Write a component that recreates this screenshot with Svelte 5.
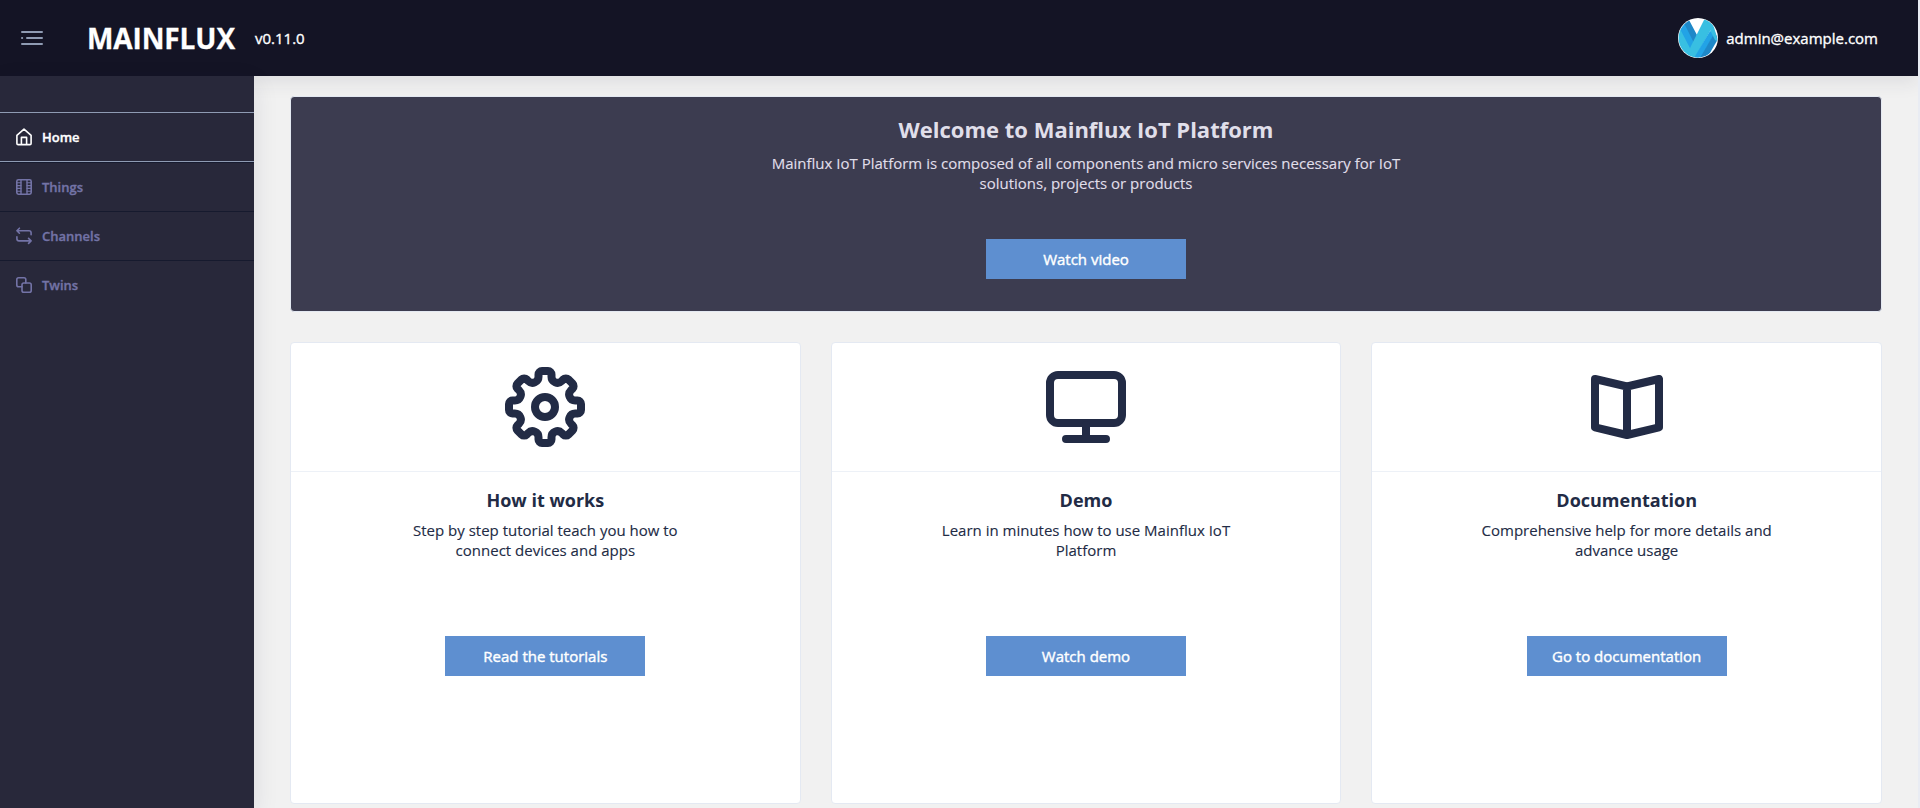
<script>
  const r = (x, y, k) => {
    const a = (k * Math.PI) / 4;
    const px = 40 + x * Math.cos(a) - y * Math.sin(a);
    const py = 40 + x * Math.sin(a) + y * Math.cos(a);
    return `${px.toFixed(2)} ${py.toFixed(2)}`;
  };
  let gear = `M${r(-6.5, -30.2, 0)}`;
  for (let k = 0; k < 8; k++) {
    gear += `L${r(-6.5, -32.5, k)}A3.5 3.5 0 0 1 ${r(-3, -36, k)}L${r(3, -36, k)}A3.5 3.5 0 0 1 ${r(6.5, -32.5, k)}L${r(6.5, -30.2, k)}A6 6 0 0 0 ${r(-6.5, -30.2, k + 1)}`;
  }
  gear += 'Z';

  const nav = [
    { name: 'Home', icon: 'home', active: true },
    { name: 'Things', icon: 'film' },
    { name: 'Channels', icon: 'loop' },
    { name: 'Twins', icon: 'copy' },
  ];
  const cards = [
    { icon: 'gear', title: 'How it works', text: 'Step by step tutorial teach you how to connect devices and apps', action: 'Read the tutorials' },
    { icon: 'monitor', title: 'Demo', text: 'Learn in minutes how to use Mainflux IoT Platform', action: 'Watch demo' },
    { icon: 'book', title: 'Documentation', text: 'Comprehensive help for more details and advance usage', action: 'Go to documentation' },
  ];
</script>

<div class="page">
  <header>
    <svg class="menu" width="22" height="14" viewBox="0 0 22 14" fill="none" stroke="#8f9bb3" stroke-width="2" stroke-linecap="round">
      <path d="M1 1H21M6 7H21M1 7H1.2M1 13H21" />
    </svg>
    <span class="brand">MAINFLUX</span>
    <span class="version">v0.11.0</span>
    <div class="user">
      <svg width="40" height="40" viewBox="0 0 40 40">
        <defs><clipPath id="disc"><circle cx="20" cy="20" r="19.4" /></clipPath></defs>
        <circle cx="20" cy="20" r="20" fill="#fff" />
        <g clip-path="url(#disc)">
          <path d="M-6 4L2 8L21 40H4Z" fill="#38bfe2" />
          <path d="M1 9L7 5L19 24L14 34Z" fill="#22a3e6" />
          <path d="M6 5L11 2L19 17L16 25Z" fill="#1e88c8" />
          <path d="M27 0L13 28L8 40H17L36 6Z" fill="#38bfe2" />
          <path d="M32 13L16 40H23L37 15Z" fill="#22a3e6" />
          <path d="M37 14L22 40H29L40 21Z" fill="#1e88c8" />
          <path d="M26 0L35 5L40 24L37 22L32 12Z" fill="#38bfe2" />
        </g>
      </svg>
      <span>admin@example.com</span>
    </div>
  </header>

  <div class="body">
    <nav>
      {#each nav as item}
        <a class:active={item.active}>
          <svg width="16" height="18" viewBox="0 0 16 18" fill="none" stroke="currentColor" stroke-width="1.6" stroke-linecap="round" stroke-linejoin="round">
            {#if item.icon === 'home'}
              <path d="M.9 7.4L8 1.2L15.1 7.4V15.4Q15.1 16.6 13.9 16.6H2.1Q.9 16.6 .9 15.4ZM5.4 16.4V9.4H10.6V16.4" />
            {:else if item.icon === 'film'}
              <rect x=".8" y="1.8" width="14.4" height="14.4" rx="1.6" />
              <path d="M5 2V16M11 2V16" stroke-width="1.4" />
              <path d="M1 4.8H5M1 7.6H5M1 10.4H5M1 13.2H5M11 4.8H15M11 7.6H15M11 10.4H15M11 13.2H15" stroke-width="1.1" />
            {:else if item.icon === 'loop'}
              <path d="M3.4 1.2L.9 3.7L3.4 6.2M.9 3.7H13Q15.1 3.7 15.1 5.8V7.8M12.6 11.4L15.1 13.9L12.6 16.4M15.1 13.9H3Q.9 13.9 .9 11.8V9.8" />
            {:else}
              <rect x="6" y="7" width="9.2" height="9.2" rx="1.8" />
              <path d="M6 10.8H2.6Q.8 10.8 .8 9V3.6Q.8 1.8 2.6 1.8H8Q9.8 1.8 9.8 3.6V7" />
            {/if}
          </svg>
          <span>{item.name}</span>
        </a>
      {/each}
    </nav>

    <main>
      <section class="hero">
        <h1>Welcome to Mainflux IoT Platform</h1>
        <p>Mainflux IoT Platform is composed of all components and micro services necessary for IoT solutions, projects or products</p>
        <button>Watch video</button>
      </section>

      <div class="cards">
        {#each cards as card}
          <section class="card">
            <div class="top">
              {#if card.icon === 'gear'}
                <svg width="80" height="80" viewBox="0 0 80 80" fill="none" stroke="#222b45" stroke-width="8">
                  <path d={gear} />
                  <circle cx="40" cy="40" r="10" />
                </svg>
              {:else if card.icon === 'monitor'}
                <svg width="80" height="72" viewBox="0 0 80 72" fill="none" stroke="#222b45" stroke-width="8" stroke-linecap="round">
                  <rect x="4" y="4" width="72" height="48" rx="8" />
                  <path d="M40 54V66M20 68H60" />
                </svg>
              {:else}
                <svg width="72" height="64" viewBox="0 0 72 64" fill="none" stroke="#222b45" stroke-width="8" stroke-linejoin="round">
                  <path d="M4 4L36 11.5L68 4V52.3L36 60L4 52.3ZM36 11.5V60" />
                </svg>
              {/if}
            </div>
            <div class="content">
              <h2>{card.title}</h2>
              <p>{card.text}</p>
              <button>{card.action}</button>
            </div>
          </section>
        {/each}
      </div>
    </main>
  </div>
</div>

<style>
  :global(body) {
    margin: 0;
    background: #e9ecf3;
  }
  .page {
    width: 1918px;
    height: 808px;
    overflow: hidden;
    display: flex;
    flex-direction: column;
    background: #f1f1f1;
    font: 15px/20px "Open Sans", sans-serif;
    color: #222b45;
  }
  header {
    position: relative;
    z-index: 2;
    flex: none;
    box-sizing: border-box;
    height: 76px;
    padding: 0 40px 0 21px;
    display: flex;
    align-items: center;
    background: #141425;
    color: #fff;
    box-shadow: 0 8px 16px rgba(33, 33, 61, 0.08);
  }
  .brand {
    margin-left: 44px;
    font-size: 28px;
    line-height: 40px;
    font-weight: 700;
    letter-spacing: -0.1px;
    -webkit-text-stroke: 0.3px;
  }
  .version {
    margin-left: 20px;
    font-weight: 500;
    font-size: 15px;
    -webkit-text-stroke: 0.35px;
  }
  .user {
    margin-left: auto;
    display: flex;
    align-items: center;
    gap: 8px;
    font-weight: 500;
    -webkit-text-stroke: 0.35px;
  }
  .body {
    flex: 1;
    display: flex;
    min-height: 0;
  }
  nav {
    position: relative;
    z-index: 3;
    flex: none;
    width: 254px;
    box-sizing: border-box;
    padding-top: 36px;
    background: #28283a;
    box-shadow: 0 8px 24px rgba(33, 33, 61, 0.1);
  }
  nav a {
    box-sizing: border-box;
    height: 49px;
    padding: 0 16px;
    display: flex;
    align-items: center;
    gap: 10px;
    color: #7373a6;
    font-size: 13px;
    font-weight: 600;
    -webkit-text-stroke: 0.35px;
    border-top: 1px solid #161a2e;
  }
  nav a.active {
    height: 50px;
    color: #fff;
    border-top: 1px solid #8f9bb3;
    border-bottom: 1px solid #8f9bb3;
  }
  main {
    flex: 1;
    padding: 20px 36px 0;
  }
  .hero {
    box-sizing: border-box;
    height: 216px;
    border: 1px solid #e4e9f2;
    border-radius: 4px;
    background: #3c3c50;
    color: #e0dfea;
    display: flex;
    flex-direction: column;
    align-items: center;
    padding-top: 16px;
  }
  h1 {
    margin: 0;
    font-size: 22px;
    line-height: 32px;
    font-weight: 700;
  }
  p {
    margin: 0;
    text-align: center;
    -webkit-text-stroke: 0.12px;
  }
  .hero p {
    margin-top: 8px;
    width: 660px;
    height: 40px;
  }
  .hero button {
    margin-top: 46px;
  }
  button {
    width: 200px;
    height: 40px;
    padding: 0;
    border: 0;
    background: #5e8fd0;
    color: #fff;
    font: 500 15px/20px "Open Sans", sans-serif;
    -webkit-text-stroke: 0.4px;
  }
  .cards {
    margin-top: 30px;
    display: grid;
    grid-template-columns: repeat(3, 1fr);
    gap: 30px;
  }
  .card {
    box-sizing: border-box;
    height: 462px;
    border: 1px solid #e4e9f2;
    border-radius: 4px;
    background: #fff;
  }
  .top {
    height: 128px;
    border-bottom: 1px solid #edf1f7;
    display: flex;
    align-items: center;
    justify-content: center;
  }
  .content {
    display: flex;
    flex-direction: column;
    align-items: center;
    padding-top: 16px;
  }
  h2 {
    margin: 0;
    font-size: 18px;
    line-height: 24px;
    font-weight: 700;
  }
  .content p {
    margin-top: 8px;
    width: 300px;
    height: 40px;
  }
  .content button {
    margin-top: 76px;
  }
</style>
